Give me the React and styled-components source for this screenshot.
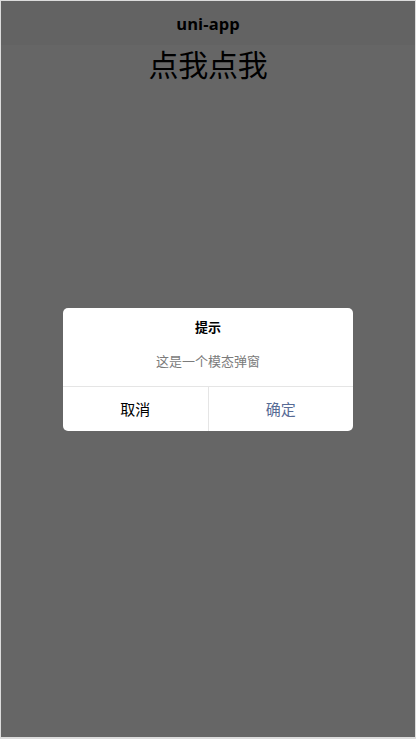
import React from "react";
import styled, { createGlobalStyle } from "styled-components";

const Global = createGlobalStyle`
  html, body { margin: 0; padding: 0; background: #e2e2e2; }
  body { font-family: "Noto Sans", "Noto Sans CJK SC", sans-serif; }
  * { box-sizing: border-box; }
`;

const Frame = styled.div`
  position: relative;
  height: 739px;
  border: 1px solid #dcdcdc;
  border-bottom-width: 2px;
  background: #ffffff;
  overflow: hidden;
  display: flex;
  flex-direction: column;
`;

const NavBar = styled.header`
  height: 44px;
  flex: none;
  background: #f8f8f8;
  display: flex;
  align-items: center;
  justify-content: center;
`;

const NavTitle = styled.h1`
  margin: 0;
  font-family: "Open Sans", "Noto Sans CJK SC", sans-serif;
  font-weight: 700;
  font-size: 16.5px;
  color: #000;
  letter-spacing: 0.1px;
`;

const Content = styled.main`
  flex: 1;
  display: flex;
  flex-direction: column;
  align-items: center;
`;

const BigButtonText = styled.div`
  font-family: "Noto Sans CJK SC", sans-serif;
  font-size: 30px;
  line-height: 44px;
  color: #000;
  margin-top: -4px;
  letter-spacing: -0.3px;
`;

const Mask = styled.div`
  position: absolute;
  inset: 0;
  background: rgba(0, 0, 0, 0.6);
  display: flex;
  align-items: center;
  justify-content: center;
  padding-top: 1px;
`;

const Modal = styled.div`
  width: 290px;
  background: #fff;
  border-radius: 5px;
  overflow: hidden;
  display: flex;
  flex-direction: column;
  text-align: center;
`;

const Body = styled.div`
  padding: 9px 16px 16px;
  display: flex;
  flex-direction: column;
  gap: 15px;
`;

const Title = styled.div`
  font-family: "Noto Sans CJK SC", sans-serif;
  font-weight: 700;
  font-size: 13px;
  line-height: 20px;
  color: #000;
`;

const Message = styled.div`
  font-family: "Noto Sans CJK SC", sans-serif;
  font-size: 13px;
  line-height: 18px;
  color: #7b7b7b;
`;

const Footer = styled.div`
  display: flex;
  border-top: 1px solid #e5e5e5;
  height: 45px;
`;

const Btn = styled.div`
  flex: 1;
  display: flex;
  align-items: center;
  justify-content: center;
  padding-bottom: 2px;
  font-family: "Noto Sans CJK SC", sans-serif;
  font-size: 15px;
  color: ${(p) => (p.$primary ? "#576b95" : "#000")};
  & + & {
    border-left: 1px solid #e5e5e5;
  }
`;

export default function App() {
  return (
    <>
      <Global />
      <Frame>
        <NavBar>
          <NavTitle>uni-app</NavTitle>
        </NavBar>
        <Content>
          <BigButtonText>点我点我</BigButtonText>
        </Content>
        <Mask>
          <Modal>
            <Body>
              <Title>提示</Title>
              <Message>这是一个模态弹窗</Message>
            </Body>
            <Footer>
              <Btn>取消</Btn>
              <Btn $primary>确定</Btn>
            </Footer>
          </Modal>
        </Mask>
      </Frame>
    </>
  );
}
